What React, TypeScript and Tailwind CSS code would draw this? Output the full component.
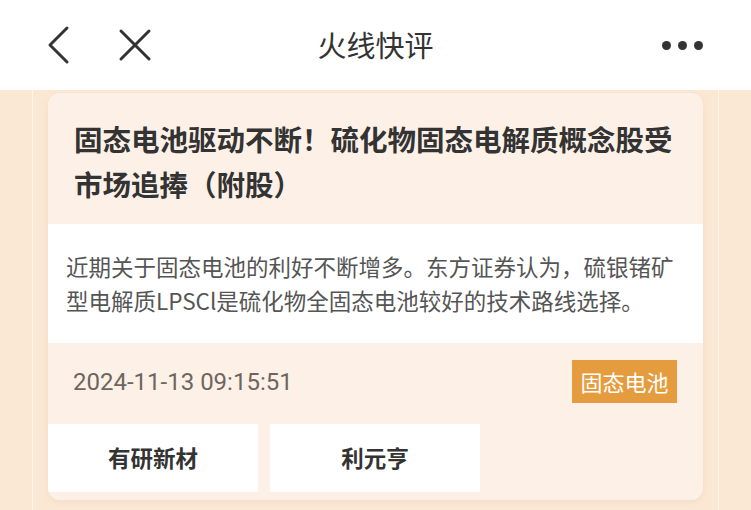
const cjk = { fontFamily: '"Noto Sans CJK SC", "Noto Sans", sans-serif' };

const stocks = ['有研新材', '利元亨'];

function Header() {
  return (
    <div className="h-[90px] bg-white flex items-center relative shrink-0">
      <svg width="24" height="40" viewBox="0 0 24 40" className="ml-[46px]">
        <polyline points="21,3 4,20 21,37" fill="none" stroke="#333" strokeWidth="3" strokeLinecap="round" strokeLinejoin="round" />
      </svg>
      <svg width="34" height="34" viewBox="0 0 34 34" className="ml-[48px]">
        <path d="M3 3 L31 31 M31 3 L3 31" stroke="#333" strokeWidth="3" strokeLinecap="round" />
      </svg>
      <div className="absolute left-0 right-0 text-center text-[29px] text-[#333] pointer-events-none" style={cjk}>
        火线快评
      </div>
      <div className="ml-auto mr-[48px] flex gap-[7px]">
        <span className="w-[9px] h-[9px] rounded-full bg-[#333]" />
        <span className="w-[9px] h-[9px] rounded-full bg-[#333]" />
        <span className="w-[9px] h-[9px] rounded-full bg-[#333]" />
      </div>
    </div>
  );
}

export default function App() {
  return (
    <div className="w-[751px] h-[510px] overflow-hidden bg-[#fbe8d4] flex flex-col" style={cjk}>
      <Header />
      <div className="flex-1 mx-[32px] border-x border-[#fdf4ea] px-[15px]">
        <div className="mt-[3px] rounded-[12px] bg-[#fdf1e7] overflow-hidden shadow-[0_2px_6px_rgba(230,200,170,0.35)]">
          <div className="pt-[23px] pb-[18px] pl-[26px] pr-[20px] text-[28.5px] leading-[45px] font-bold text-[#333]">
            固态电池驱动不断！硫化物固态电解质概念股受市场追捧（附股）
          </div>
          <div className="bg-white pt-[25px] pb-[26px] pl-[18px] pr-[10px] text-[22.5px] leading-[34px] text-[#555]">
            近期关于固态电池的利好不断增多。东方证券认为，硫银锗矿型电解质LPSCl是硫化物全固态电池较好的技术路线选择。
          </div>
          <div className="flex items-center justify-between pt-[17px] pl-[25px] pr-[26px]">
            <span className="text-[24px] text-[#6e6560]" style={{ fontFamily: 'Roboto, "Noto Sans", sans-serif' }}>
              2024-11-13 09:15:51
            </span>
            <span className="h-[43px] w-[105px] flex items-center justify-center bg-[#e59c3e] text-white text-[22px]">
              固态电池
            </span>
          </div>
          <div className="flex gap-[12px] mt-[21px] pb-[8px]">
            {stocks.map((s) => (
              <div key={s} className="w-[210px] h-[68px] bg-white flex items-center justify-center text-[22.5px] font-bold text-[#333]">
                {s}
              </div>
            ))}
          </div>
        </div>
      </div>
    </div>
  );
}
